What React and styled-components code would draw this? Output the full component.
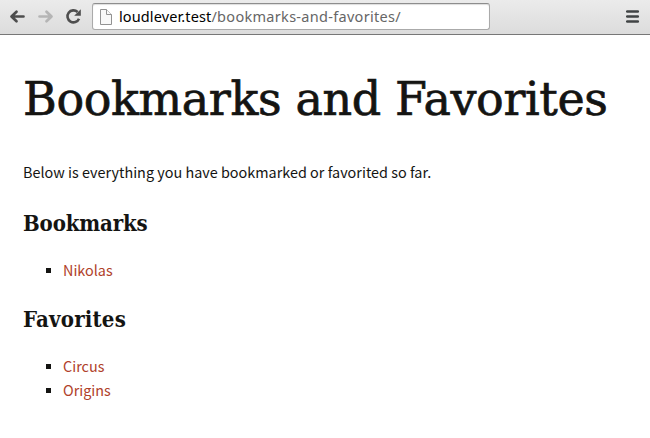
import React from "react";
import styled, { createGlobalStyle } from "styled-components";

const GlobalStyle = createGlobalStyle`
  *, *::before, *::after { box-sizing: border-box; }
  body { margin: 0; background: #fff; }
`;

const Window = styled.div`
  min-height: 438px;
  background: #fff;
  color: #141412;
  font: 14.4px/24px "Noto Sans CJK SC", sans-serif;
`;

const Toolbar = styled.header`
  display: flex;
  align-items: flex-start;
  height: 35px;
  padding: 3px 10px 0 8px;
  background: linear-gradient(#ebebeb, #dcdcdc);
  border-bottom: 1px solid #777;
`;

const NavButtons = styled.nav`
  display: flex;
  width: 84px;
  padding-top: 4px;
`;

const NavButton = styled.button`
  display: block;
  width: 28px;
  height: 20px;
  padding: 0;
  border: 0;
  background: none;
  color: ${(p) => (p.$muted ? "#b5b5b5" : "#4e4e4e")};
  svg { display: block; }
`;

const AddressBar = styled.div`
  display: flex;
  align-items: center;
  width: 398px;
  height: 27px;
  padding-left: 7px;
  background: #fff;
  border: 1px solid #aaa;
  border-top-color: #8d8d8d;
  border-radius: 3px;
  box-shadow: inset 0 1px 1px #ddd;
`;

const Url = styled.span`
  margin: 0 0 1px 7px;
  font: 14.5px/24px "Noto Sans", sans-serif;
  letter-spacing: 0.3px;
  white-space: nowrap;
  color: #666;
`;

const Host = styled.span`
  letter-spacing: 0.12px;
  color: #000;
`;

const MenuButton = styled(NavButton)`
  width: 14px;
  margin: 4px 0 0 auto;
  color: #414445;
`;

const Content = styled.main`
  padding: 32px 23px 0;
`;

const Title = styled.h1`
  margin: 0 0 29px;
  font: 400 46px/64px "DejaVu Serif", serif;
  letter-spacing: -0.38px;
  -webkit-text-stroke: 0.7px currentColor;
  white-space: nowrap;
`;

const Intro = styled.p`
  margin: 0 0 27px;
  letter-spacing: 0.01px;
`;

const SectionTitle = styled.h3`
  margin: 0 0 23px;
  font: 700 22px/24px "DejaVu Serif Condensed", "DejaVu Serif", serif;
  letter-spacing: ${(p) => p.$tracking};
`;

const List = styled.ul`
  margin: 0 0 25px;
  padding: 0;
  list-style: none;
`;

const Item = styled.li`
  display: flex;
  align-items: center;
  gap: 12px;
  height: 24px;
  padding-left: 23px;
  &::before {
    content: "";
    width: 5px;
    height: 5px;
    margin-top: 1px;
    background: #141412;
  }
`;

const Link = styled.a`
  color: #b0412a;
  text-decoration: none;
`;

const Arrow = ({ flip }) => (
  <svg width="19" height="20" viewBox="0 0 19 20" fill="none" stroke="currentColor" strokeWidth="2.7" strokeLinecap="round" strokeLinejoin="round">
    <path d={flip ? "M3.5 9.5H15M10.5 4.7l5 4.8-5 4.8" : "M15.5 9.5H4M8.5 4.7l-5 4.8 5 4.8"} />
  </svg>
);

const Reload = () => (
  <svg width="20" height="20" viewBox="0 0 20 20">
    <path d="M13.6 5A6 6 0 1 0 15 11.7" fill="none" stroke="currentColor" strokeWidth="2.6" />
    <path d="M16.8 2.2v6.6h-6.6z" fill="currentColor" />
  </svg>
);

const PageIcon = () => (
  <svg width="12" height="16" viewBox="0 0 12 16" fill="#f8f8f8" stroke="#929292">
    <path d="M.5.5h6l5 5v10H.5z" />
    <path d="M6.5.5v5h5" />
  </svg>
);

const sections = [
  { title: "Bookmarks", tracking: "-0.15px", items: ["Nikolas"] },
  { title: "Favorites", tracking: "0.2px", items: ["Circus", "Origins"] },
];

export default function App() {
  return (
    <Window>
      <GlobalStyle />
      <Toolbar>
        <NavButtons>
          <NavButton aria-label="Back"><Arrow /></NavButton>
          <NavButton aria-label="Forward" $muted><Arrow flip /></NavButton>
          <NavButton aria-label="Reload"><Reload /></NavButton>
        </NavButtons>
        <AddressBar>
          <PageIcon />
          <Url><Host>loudlever.test</Host>/bookmarks-and-favorites/</Url>
        </AddressBar>
        <MenuButton aria-label="Menu">
          <svg width="14" height="20" viewBox="0 0 14 20" stroke="currentColor" strokeWidth="2.6" strokeLinecap="round">
            <path d="M1.2 4.5h10.6M1.2 9.5h10.6M1.2 14.5h10.6" />
          </svg>
        </MenuButton>
      </Toolbar>
      <Content>
        <Title>Bookmarks and Favorites</Title>
        <Intro>Below is everything you have bookmarked or favorited so far.</Intro>
        {sections.map((s) => (
          <section key={s.title}>
            <SectionTitle $tracking={s.tracking}>{s.title}</SectionTitle>
            <List>
              {s.items.map((i) => (
                <Item key={i}><Link>{i}</Link></Item>
              ))}
            </List>
          </section>
        ))}
      </Content>
    </Window>
  );
}
